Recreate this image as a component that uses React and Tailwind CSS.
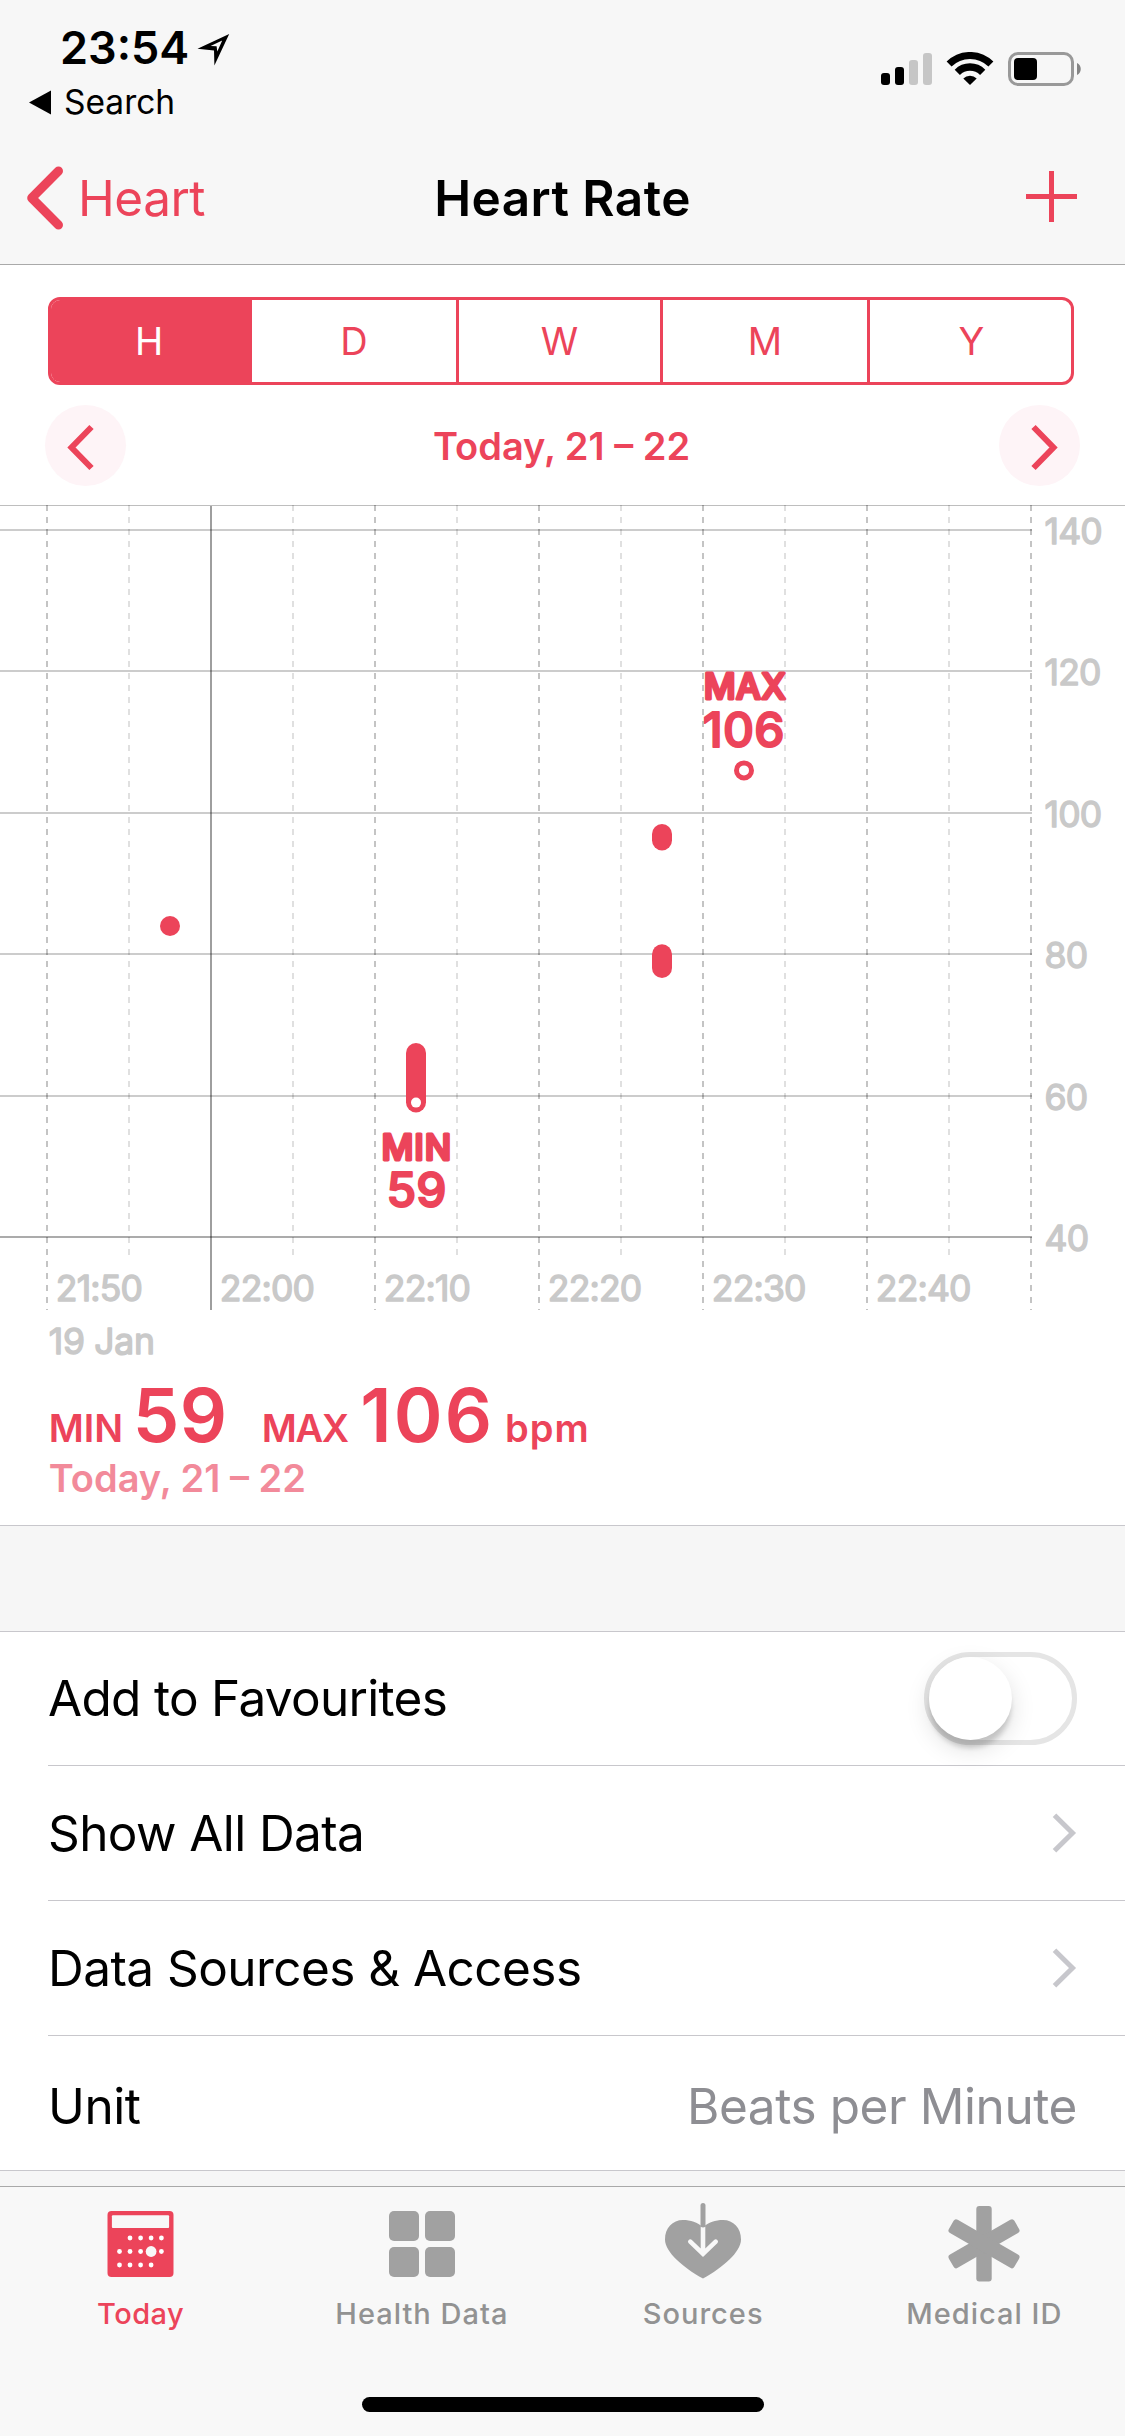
import React from "react";

function StatusIcons() {
  return (
    <svg className="h-[34px] w-[201px]" viewBox="881 52 201 34" fill="none">
      <rect x="881" y="73" width="9" height="12" rx="3" fill="#000" />
      <rect x="895" y="67" width="9" height="18" rx="3" fill="#000" />
      <rect x="909" y="60" width="9" height="25" rx="3" fill="#c6c6c6" />
      <rect x="923" y="53" width="9" height="32" rx="3" fill="#c6c6c6" />
      <path d="M949.1 64.1A29.6 29.6 0 0 1 990.9 64.1" stroke="#000" strokeWidth="7" />
      <path d="M957.3 72.3A18 18 0 0 1 982.7 72.3" stroke="#000" strokeWidth="7.4" />
      <path d="M970 85L963.3 78.4A9.5 9.5 0 0 1 976.7 78.4Z" fill="#000" />
      <rect x="1009.5" y="53.5" width="63" height="31" rx="8.5" stroke="#999" strokeWidth="3" />
      <rect x="1014" y="58" width="23" height="22" rx="4" fill="#000" />
      <path d="M1077 63C1082 65 1082 73 1077 75Z" fill="#858585" />
    </svg>
  );
}

function Header() {
  return (
    <header className="flex h-[265px] shrink-0 flex-col border-b border-[#a9a9a9] bg-[#f7f7f7]">
      <div className="flex h-[132px] justify-between">
        <div className="flex flex-col pt-[10px]">
          <div className="flex h-[74px] items-center gap-[8px] pl-[60px]">
            <span className="pt-[1px] text-[45px] font-semibold">23:54</span>
            <svg className="mt-[5px] h-[34px] w-[34px]" viewBox="197 33 34 34">
              <path
                fillRule="evenodd"
                d="M197.5 48.7L229.2 34L214.4 65.6L214 50.6ZM210.6 46L222.2 40.6L217.3 51.6L216.6 46.3Z"
              />
            </svg>
          </div>
          <div className="flex h-[37px] items-center gap-[13px] pl-[29px]">
            <svg className="h-[25px] w-[22px]" viewBox="0 0 22 25">
              <path d="M0 12.5L22 0.5V24.5Z" />
            </svg>
            <span className="text-[33.5px]">Search</span>
          </div>
        </div>
        <div className="pt-[52px] pr-[43px]">
          <StatusIcons />
        </div>
      </div>
      <nav className="grid h-[132px] grid-cols-3 items-center">
        <div className="flex items-center gap-[14px] pl-[27px] text-[#ec445a]">
          <svg className="h-[64px] w-[37px]" viewBox="27 166.5 37 64" fill="none" stroke="#ec445a" strokeWidth="9" strokeLinecap="round" strokeLinejoin="round">
            <path d="M58.5 171.5L31.7 198.5L58.5 225.5" />
          </svg>
          <span className="text-[49.5px] tracking-[-0.5px]">Heart</span>
        </div>
        <h1 className="text-center text-[49.5px] font-semibold tracking-[0.44px] whitespace-nowrap">Heart Rate</h1>
        <div className="flex justify-end pr-[48px] pb-[3px]">
          <svg className="h-[51px] w-[51px]" viewBox="0 0 51 51" stroke="#ec445a" strokeWidth="5">
            <path d="M25.5 0V51M0 25.5H51" />
          </svg>
        </div>
      </nav>
    </header>
  );
}

function Segments() {
  const cell = "flex items-center justify-center pt-[1px]";
  return (
    <div className="mt-[32px] ml-[48px] grid h-[88px] w-[1026px] shrink-0 grid-cols-[201px_204px_204px_207px_204px] overflow-hidden rounded-[12px] border-[3px] border-[#ec445a] text-[38px] text-[#ec445a]">
      <div className={cell + " bg-[#ec445a] pr-[5px] text-white"}>H</div>
      <div className={cell}>D</div>
      <div className={cell + " border-l-[3px] border-[#ec445a]"}>W</div>
      <div className={cell + " border-l-[3px] border-[#ec445a]"}>M</div>
      <div className={cell + " border-l-[3px] border-[#ec445a] pl-[2px]"}>Y</div>
    </div>
  );
}

function RoundButton({ d }) {
  return (
    <div className="flex size-[81px] items-center justify-center rounded-full bg-[#fef4f7]">
      <svg className="size-[81px]" viewBox="0 0 81 81" fill="none" stroke="#ec445a" strokeWidth="6">
        <path d={d} />
      </svg>
    </div>
  );
}

function DateNav() {
  return (
    <div className="flex h-[120px] shrink-0 items-center justify-between pr-[45px] pl-[45px]">
      <RoundButton d="M46.5 22L26.5 42.5L46.5 63" />
      <span className="pt-[2px] pr-[2px] text-[38px] font-semibold text-[#ec445a]">Today, 21 – 22</span>
      <RoundButton d="M34.5 22L54.5 42.5L34.5 63" />
    </div>
  );
}

const times = ["21:50", "22:00", "22:10", "22:20", "22:30", "22:40"];
const levels = [140, 120, 100, 80, 60, 40];

const levelY = (v) => 530 + (140 - v) * 7.07;

function Chart() {
  return (
    <svg className="block h-[860px] w-[1125px] shrink-0 font-['Inter']" viewBox="0 505 1125 860">
      <rect x="0" y="505" width="1125" height="1" fill="#bebebe" />
      {levels.map((v) => (
        <rect key={v} x="0" y={Math.round(levelY(v)) - 1} width="1032" height="2" fill="#000" fillOpacity={v === 40 ? 0.33 : 0.2} />
      ))}
      {[47, 211, 375, 539, 703, 867, 1031].map((x) =>
        x === 211 ? (
          <rect key={x} x="210" y="506" width="2" height="804" fill="#000" fillOpacity="0.38" />
        ) : (
          <line key={x} x1={x} x2={x} y1="505" y2="1310" stroke="#000" strokeOpacity="0.23" strokeWidth="2" strokeDasharray="6 6" />
        )
      )}
      {[129, 293, 457, 621, 785, 949].map((x) => (
        <line key={x} x1={x} x2={x} y1="505" y2="1255" stroke="#000" strokeOpacity="0.12" strokeWidth="2" strokeDasharray="6 6" />
      ))}
      <g className="text-[35.5px] font-normal tracking-[-0.8px]" fill="#c9c9c9" stroke="#c9c9c9" strokeWidth="1.4" strokeLinejoin="round">
        {levels.map((v) => (
          <text key={v} x="1044.5" y={levelY(v) + 14}>{v}</text>
        ))}
        {times.map((t, i) => (
          <text key={t} x={55.8 + i * 164} y="1301.3">{t}</text>
        ))}
        <text x="48.8" y="1353.5" className="tracking-[-0.3px]">19 Jan</text>
      </g>
      <g fill="#ec445a">
        <circle cx="170" cy="926" r="10" />
        <rect x="652" y="824" width="20" height="26.5" rx="10" />
        <rect x="652" y="944.3" width="20" height="33.7" rx="10" />
        <rect x="406" y="1043" width="20" height="69.5" rx="10" />
      </g>
      <circle cx="416" cy="1102.6" r="5" fill="#fff" />
      <circle cx="744" cy="770.4" r="7.5" fill="#fff" stroke="#ec445a" strokeWidth="5" />
      <g fill="#ec445a" stroke="#ec445a" strokeLinejoin="round" textAnchor="middle">
        <g className="text-[35px] font-medium" strokeWidth="3">
          <text x="416.8" y="1159.5" className="tracking-[0.8px]">MIN</text>
          <text x="745" y="698.7" className="tracking-[0.4px]">MAX</text>
        </g>
        <g className="text-[48px] font-medium" strokeWidth="2">
          <text x="416.5" y="1207">59</text>
          <text x="743.7" y="747" className="tracking-[0.3px]">106</text>
        </g>
      </g>
    </svg>
  );
}

function Summary() {
  return (
    <section className="h-[160px] shrink-0 pl-[48.7px] font-semibold text-[#ec445a]">
      <div className="flex h-[100px] items-baseline text-[38px] leading-[100px] whitespace-nowrap">
        <span className="w-[84px]">MIN</span>
        <span className="w-[129px] text-[74px] tracking-[0.5px]">59</span>
        <span className="w-[98.6px] tracking-[-1.3px]">MAX</span>
        <span className="w-[144.7px] text-[74px] tracking-[2.2px]">106</span>
        <span className="tracking-[1.1px]">bpm</span>
      </div>
      <div className="h-[26px] text-[38px] leading-[26px] text-[#f28a9a]">Today, 21 – 22</div>
    </section>
  );
}

function Chevron() {
  return (
    <svg className="h-[40px] w-[25px]" viewBox="0 0 25 40" fill="none" stroke="#c7c7cc" strokeWidth="5">
      <path d="M2.5 2.3L20.5 20L2.5 37.7" />
    </svg>
  );
}

function Toggle() {
  return (
    <div className="h-[93px] w-[153px] rounded-full border-[5px] border-[#e5e5e5]">
      <div className="size-[83px] rounded-full bg-white shadow-[0_9px_5px_-1px_rgba(0,0,0,0.16),0_9px_24px_rgba(0,0,0,0.13)]" />
    </div>
  );
}

function Row({ label, last, nudge, children }) {
  return (
    <div className={"ml-[48px] flex shrink-0 items-center justify-between pr-[48px] " + (last ? "h-[134px]" : "h-[135px] border-b border-[#c8c7cc]")}>
      <span className={nudge}>{label}</span>
      {children}
    </div>
  );
}

function Tab({ label, active, children }) {
  return (
    <div className={"flex flex-1 flex-col items-center " + (active ? "text-[#ec445a]" : "text-[#929292]")}>
      <svg className="h-[80px] w-[80px]" viewBox="0 0 80 80">{children}</svg>
      <span className={"mt-[10.5px] h-[40px] text-[29px] leading-[40px] font-medium " + (active ? "tracking-[0.5px]" : "tracking-[1px]")}>{label}</span>
    </div>
  );
}

const dots = [
  [29, 35], [39.6, 35], [50.1, 35], [60.4, 35],
  [18.5, 48.5], [29, 48.5], [39.6, 48.5], [60.4, 48.5],
  [18.5, 62], [29, 62], [39.6, 62], [50.1, 62],
];

function TabBar() {
  return (
    <footer className="flex h-[250px] shrink-0 flex-col items-center border-t border-[#a9a9a9] bg-[#f8f8f8] pt-[16px]">
      <div className="flex w-full">
        <Tab label="Today" active>
          <rect x="6.5" y="8" width="66" height="66" rx="4" fill="#ec445a" />
          <rect x="10.9" y="12.3" width="57.2" height="12.7" rx="1" fill="#f8f8f8" />
          {dots.map(([x, y]) => (
            <circle key={x + "-" + y} cx={x} cy={y} r="2.4" fill="#fff" />
          ))}
          <circle cx="50.1" cy="48.5" r="5.4" fill="#f8f8f8" />
        </Tab>
        <Tab label="Health Data">
          <g fill="#a1a1a1">
            <rect x="7" y="8" width="30" height="30" rx="5" />
            <rect x="43" y="8" width="30" height="30" rx="5" />
            <rect x="7" y="44" width="30" height="30" rx="5" />
            <rect x="43" y="44" width="30" height="30" rx="5" />
          </g>
        </Tab>
        <Tab label="Sources">
          <path
            d="M40 75.5C20 64.5 2 49 2 36.5C2 25 9.5 17 20 17C27.5 17 34.5 19.5 40 24C45.5 19.5 52.5 17 60 17C70.5 17 78 25 78 36.5C78 49 60 64.5 40 75.5Z"
            fill="#a1a1a1"
          />
          <path d="M40 24V49M27.3 38.7L40 50.9L52.7 38.7" fill="none" stroke="#f8f8f8" strokeWidth="4.6" strokeLinecap="round" />
          <path d="M40 2.5V22" stroke="#f8f8f8" strokeWidth="5.6" />
          <path d="M40 2.5V22" stroke="#a1a1a1" strokeWidth="5" strokeLinecap="round" />
        </Tab>
        <Tab label="Medical ID">
          <g fill="#a1a1a1">
            <rect x="32.3" y="3" width="15.4" height="75.6" rx="3" />
            <rect x="32.3" y="3" width="15.4" height="75.6" rx="3" transform="rotate(60 40 40.8)" />
            <rect x="32.3" y="3" width="15.4" height="75.6" rx="3" transform="rotate(-60 40 40.8)" />
          </g>
        </Tab>
      </div>
      <div className="mt-[63.5px] h-[15px] w-[402px] rounded-full bg-black" />
    </footer>
  );
}

export default function App() {
  return (
    <div className="flex h-[2436px] w-[1125px] flex-col overflow-hidden bg-white font-['Inter',sans-serif] text-black">
      <Header />
      <Segments />
      <DateNav />
      <Chart />
      <Summary />
      <div className="h-[107px] shrink-0 border-y border-[#c8c7cc] bg-[#f6f6f6]" />
      <section className="-mt-px shrink-0 border-t border-[#c8c7cc] text-[49.5px] tracking-[-0.6px]">
        <div className="-mt-px">
          <Row label="Add to Favourites" nudge="pt-[1px] tracking-[-0.7px]">
            <Toggle />
          </Row>
        </div>
        <Row label="Show All Data" nudge="pt-[1px]">
          <Chevron />
        </Row>
        <Row label="Data Sources & Access" nudge="pt-[1px] tracking-[-0.55px]">
          <Chevron />
        </Row>
        <Row label="Unit" last nudge="pt-[6px] tracking-[-0.4px]">
          <span className="pt-[6px] tracking-[-0.42px] text-[#8e8e93]">Beats per Minute</span>
        </Row>
      </section>
      <div className="h-[16px] shrink-0 border-t border-[#c8c7cc] bg-[#f6f6f6]" />
      <TabBar />
    </div>
  );
}
